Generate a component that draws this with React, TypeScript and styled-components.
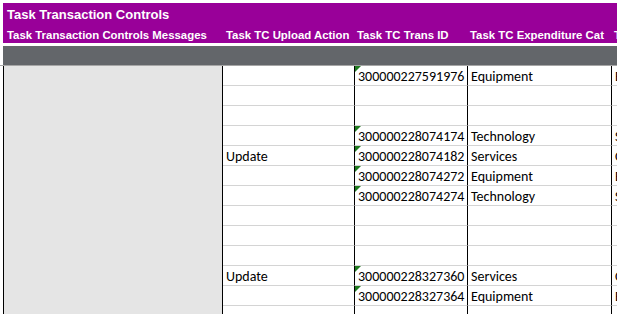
import React from 'react';
import styled, { createGlobalStyle } from 'styled-components';

type Row = { action?: string; id?: string; cat?: string; next?: string };

const rows: Row[] = [
  { id: '300000227591976', cat: 'Equipment', next: 'E' },
  {},
  {},
  { id: '300000228074174', cat: 'Technology', next: 'S' },
  { action: 'Update', id: '300000228074182', cat: 'Services', next: 'C' },
  { id: '300000228074272', cat: 'Equipment', next: 'E' },
  { id: '300000228074274', cat: 'Technology', next: 'S' },
  {},
  {},
  {},
  { action: 'Update', id: '300000228327360', cat: 'Services', next: 'C' },
  { id: '300000228327364', cat: 'Equipment', next: 'E' },
  {},
];

const GlobalStyle = createGlobalStyle`
  html, body {
    margin: 0;
    padding: 0;
    background: #ffffff;
    overflow: hidden;
  }
`;

const App: React.FC = () => {
  return (
    <Sheet>
      <GlobalStyle />
      <Banner>
        <Title>Task Transaction Controls</Title>
        <HeaderRow>
          <HeaderCell>Task Transaction Controls Messages</HeaderCell>
          <HeaderCell>Task TC Upload Action</HeaderCell>
          <HeaderCell>Task TC Trans ID</HeaderCell>
          <HeaderCell>Task TC Expenditure Cat</HeaderCell>
          <HeaderCell>T</HeaderCell>
        </HeaderRow>
      </Banner>
      <GrayBar />
      <Divider />
      <Grid>
        <MessagesCell style={{ gridRow: `1 / span ${rows.length}` }} />
        {rows.map((r, i) => (
          <React.Fragment key={i}>
            <Cell $border>{r.action}</Cell>
            <Cell $border>
              {r.id && <Marker />}
              {r.id}
            </Cell>
            <Cell $border>{r.cat}</Cell>
            <Cell>{r.next}</Cell>
          </React.Fragment>
        ))}
      </Grid>
    </Sheet>
  );
};

const Sheet = styled.div`
  width: 617px;
  height: 314px;
  overflow: hidden;
  padding-top: 3px;
  box-sizing: border-box;
`;

const Banner = styled.div`
  margin-left: 3px;
  height: 40px;
  background: #990099;
  color: #ffffff;
  font-family: 'Liberation Sans', Arial, sans-serif;
  font-weight: bold;
  display: flex;
  flex-direction: column;
`;

const Title = styled.div`
  font-size: 13px;
  line-height: 16px;
  padding: 4px 0 0 4px;
  white-space: nowrap;
`;

const HeaderRow = styled.div`
  display: grid;
  grid-template-columns: 219px 131px 113px 144px 1fr;
  font-size: 11.4px;
  line-height: 13px;
  padding-top: 6px;
  white-space: nowrap;
`;

const HeaderCell = styled.div`
  padding-left: 4px;
  overflow: hidden;
`;

const GrayBar = styled.div`
  margin: 3px 0 0 3px;
  height: 19px;
  background: #63666a;
`;

const Divider = styled.div`
  height: 1px;
  background: #a6a6a6;
`;

const Grid = styled.div`
  margin-left: 3px;
  display: grid;
  grid-template-columns: 220px 132px 113px 144px 1fr;
  grid-auto-rows: 20px;
  font-family: Carlito, Calibri, 'Liberation Sans', sans-serif;
  font-size: 14px;
  color: #000000;
`;

const MessagesCell = styled.div`
  grid-column: 1;
  background: #e5e5e5;
  border-left: 1px solid #000000;
  border-right: 1px solid #000000;
  box-sizing: border-box;
`;

const Cell = styled.div<{ $border?: boolean }>`
  position: relative;
  box-sizing: border-box;
  border-bottom: 1px solid #d4d4d4;
  border-right: ${(p) => (p.$border ? '1px solid #000000' : 'none')};
  padding: 0 0 0 3px;
  display: flex;
  align-items: flex-end;
  white-space: nowrap;
  overflow: hidden;
  line-height: 17px;
`;

const Marker = styled.span`
  position: absolute;
  left: 0;
  top: 0;
  width: 0;
  height: 0;
  border-top: 6px solid #1f7a1f;
  border-right: 6px solid transparent;
`;

export default App;
